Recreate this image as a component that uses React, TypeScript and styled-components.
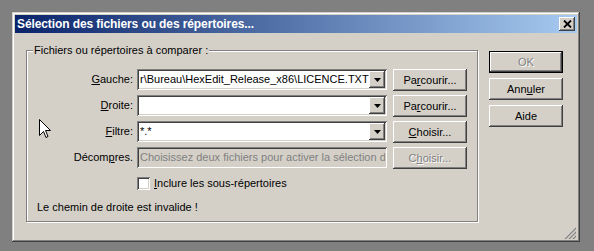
import React from "react";
import styled, { createGlobalStyle } from "styled-components";

const GlobalStyle = createGlobalStyle`
  html, body {
    margin: 0;
    padding: 0;
    background: #808080;
  }
  body {
    font-family: "Liberation Sans", Arial, sans-serif;
    font-size: 11px;
    color: #000;
  }
`;

const raised = `
  box-shadow: inset -1px -1px #404040, inset 1px 1px #ffffff,
    inset -2px -2px #808080, inset 2px 2px #d4d0c8;
`;

const sunken = `
  box-shadow: inset 1px 1px #808080, inset -1px -1px #ffffff,
    inset 2px 2px #404040, inset -2px -2px #d4d0c8;
`;

const Page = styled.div`
  width: 594px;
  height: 251px;
  padding: 12px 0 0 12px;
  box-sizing: border-box;
`;

const Dialog = styled.div`
  position: relative;
  width: 568px;
  height: 230px;
  box-sizing: border-box;
  padding: 3px;
  background: #d4d0c8;
  box-shadow: inset -1px -1px #404040, inset 1px 1px #d4d0c8,
    inset -2px -2px #808080, inset 2px 2px #ffffff;
  display: flex;
  flex-direction: column;
`;

const TitleBar = styled.div`
  height: 18px;
  display: flex;
  align-items: center;
  justify-content: space-between;
  padding: 0 2px;
  background: linear-gradient(to right, #0a246a, #a6caf0);
`;

const Title = styled.span`
  color: #fff;
  font-weight: bold;
  font-size: 12px;
  letter-spacing: -0.1px;
  white-space: nowrap;
`;

const CloseButton = styled.div`
  width: 16px;
  height: 14px;
  background: #d4d0c8;
  display: flex;
  align-items: center;
  justify-content: center;
  ${raised}
`;

const Body = styled.div`
  display: flex;
  padding: 17px 0 0 11px;
`;

const GroupBox = styled.div`
  width: 452px;
  height: 172px;
  box-sizing: border-box;
  border: 1px solid #808080;
  box-shadow: 1px 1px 0 #ffffff, inset 1px 1px 0 #ffffff;
  display: flex;
  flex-direction: column;
`;

const Caption = styled.div`
  align-self: flex-start;
  margin: -7px 0 0 6px;
  padding: 0 1px;
  line-height: 13px;
  background: #d4d0c8;
`;

const Form = styled.div`
  display: grid;
  grid-template-columns: 110px 250px 80px;
  grid-auto-rows: 22px;
  row-gap: 4px;
  margin-top: 12px;
`;

const Label = styled.label`
  text-align: right;
  padding-right: 4px;
  line-height: 21px;
  white-space: nowrap;
`;

const Field = styled.div<{ $disabled?: boolean }>`
  height: 21px;
  box-sizing: border-box;
  padding: 2px;
  display: flex;
  background: ${({ $disabled }) => ($disabled ? "#d4d0c8" : "#ffffff")};
  ${sunken}
`;

const FieldText = styled.div<{ $disabled?: boolean }>`
  flex: 1;
  overflow: hidden;
  white-space: nowrap;
  line-height: 17px;
  padding-left: 1px;
  color: ${({ $disabled }) => ($disabled ? "#808080" : "#000")};
`;

const DropButton = styled.div`
  width: 16px;
  height: 17px;
  background: #d4d0c8;
  display: flex;
  align-items: center;
  justify-content: center;
  ${raised}
`;

const Button = styled.div<{ $disabled?: boolean; $default?: boolean }>`
  width: 74px;
  height: 22px;
  box-sizing: border-box;
  justify-self: end;
  display: flex;
  align-items: center;
  justify-content: center;
  background: #d4d0c8;
  color: ${({ $disabled }) => ($disabled ? "#808080" : "#000")};
  text-shadow: ${({ $disabled }) => ($disabled ? "1px 1px 0 #ffffff" : "none")};
  border: ${({ $default }) => ($default ? "1px solid #000" : "none")};
  ${raised}
`;

const CheckRow = styled.div`
  grid-column: 2 / 4;
  display: flex;
  align-items: center;
  margin-top: -2px;
`;

const CheckBox = styled.div`
  width: 13px;
  height: 13px;
  box-sizing: border-box;
  background: #fff;
  margin-right: 4px;
  ${sunken}
`;

const Status = styled.div`
  margin: 6px 0 0 10px;
  line-height: 13px;
`;

const ButtonColumn = styled.div`
  display: flex;
  flex-direction: column;
  gap: 5px;
  margin: 1px 0 0 11px;
  width: 74px;
`;

const Key = styled.u`
  text-decoration: underline;
`;

const Cursor = styled.svg`
  position: absolute;
  left: 27px;
  top: 107px;
`;

const Grip = styled.svg`
  position: absolute;
  right: 4px;
  bottom: 3px;
`;

function Arrow() {
  return (
    <svg width="7" height="4" viewBox="0 0 7 4">
      <path d="M0 0h7L3.5 4z" fill="#000" />
    </svg>
  );
}

function Combo({ value }: { value: string }) {
  return (
    <Field>
      <FieldText>{value}</FieldText>
      <DropButton>
        <Arrow />
      </DropButton>
    </Field>
  );
}

export default function App() {
  return (
    <>
      <GlobalStyle />
      <Page>
        <Dialog>
          <TitleBar>
            <Title>Sélection des fichiers ou des répertoires...</Title>
            <CloseButton>
              <svg width="9" height="8" viewBox="0 0 9 8">
                <path d="M1 0.5L8 7.5M8 0.5L1 7.5" stroke="#000" strokeWidth="1.8" />
              </svg>
            </CloseButton>
          </TitleBar>
          <Body>
            <GroupBox>
              <Caption>Fichiers ou répertoires à comparer :</Caption>
              <Form>
                <Label>
                  <Key>G</Key>auche:
                </Label>
                <Combo value="r\Bureau\HexEdit_Release_x86\LICENCE.TXT" />
                <Button>
                  Pa<Key>r</Key>courir...
                </Button>

                <Label>
                  <Key>D</Key>roite:
                </Label>
                <Combo value="" />
                <Button>
                  Pa<Key>r</Key>courir...
                </Button>

                <Label>
                  <Key>F</Key>iltre:
                </Label>
                <Combo value="*.*" />
                <Button>
                  <Key>C</Key>hoisir...
                </Button>

                <Label>
                  Décom<Key>p</Key>res.
                </Label>
                <Field $disabled>
                  <FieldText $disabled>
                    Choisissez deux fichiers pour activer la sélection du décompresseur
                  </FieldText>
                </Field>
                <Button $disabled>
                  C<Key>h</Key>oisir...
                </Button>

                <CheckRow>
                  <CheckBox />
                  <span>
                    <Key>I</Key>nclure les sous-répertoires
                  </span>
                </CheckRow>
              </Form>
              <Status>Le chemin de droite est invalide !</Status>
            </GroupBox>
            <ButtonColumn>
              <Button $default $disabled>
                OK
              </Button>
              <Button>
                Ann<Key>u</Key>ler
              </Button>
              <Button>Aide</Button>
            </ButtonColumn>
          </Body>
          <Cursor width="12" height="20" viewBox="0 0 12 20">
            <path
              d="M0.5 0.5V16.5L4.5 12.5L7 18.5L9 17.5L6.5 11.5H11.5Z"
              fill="#fff"
              stroke="#000"
              strokeWidth="1"
            />
          </Cursor>
          <Grip width="12" height="12" viewBox="0 0 12 12">
            <path d="M11 1L1 11M11 5L5 11M11 9L9 11" stroke="#fff" strokeWidth="1" />
            <path d="M12 1L1 12M12 5L5 12M12 9L9 12" stroke="#808080" strokeWidth="1.4" />
          </Grip>
        </Dialog>
      </Page>
    </>
  );
}
